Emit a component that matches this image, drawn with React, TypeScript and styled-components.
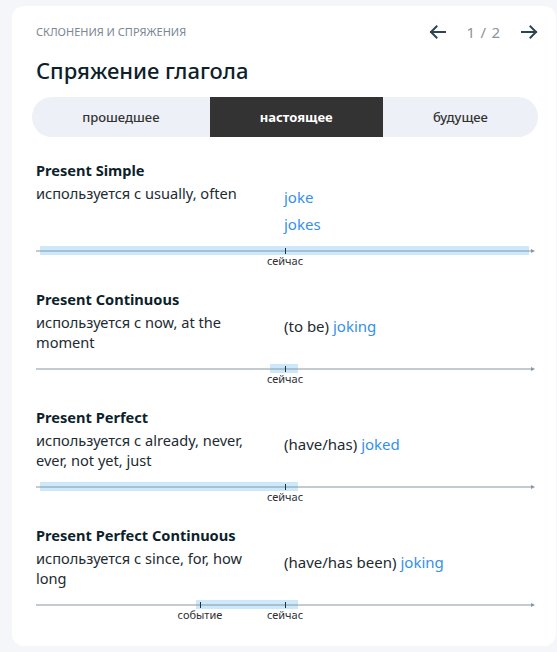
import React from 'react';
import styled, { createGlobalStyle } from 'styled-components';

interface Mark {
  at: number;
  label: string;
}

interface Tense {
  name: string;
  usage: string;
  aux?: string;
  forms: string[];
  band: [number, number];
  marks: Mark[];
}

const NOW = 249;

const tenses: Tense[] = [
  {
    name: 'Present Simple',
    usage: 'используется с usually, often',
    forms: ['joke', 'jokes'],
    band: [4, 493],
    marks: [{ at: NOW, label: 'сейчас' }],
  },
  {
    name: 'Present Continuous',
    usage: 'используется с now, at the moment',
    aux: '(to be)',
    forms: ['joking'],
    band: [234, 262],
    marks: [{ at: NOW, label: 'сейчас' }],
  },
  {
    name: 'Present Perfect',
    usage: 'используется с already, never, ever, not yet, just',
    aux: '(have/has)',
    forms: ['joked'],
    band: [4, 262],
    marks: [{ at: NOW, label: 'сейчас' }],
  },
  {
    name: 'Present Perfect Continuous',
    usage: 'используется с since, for, how long',
    aux: '(have/has been)',
    forms: ['joking'],
    band: [160, 262],
    marks: [
      { at: 164, label: 'событие' },
      { at: NOW, label: 'сейчас' },
    ],
  },
];

const tabs = ['прошедшее', 'настоящее', 'будущее'];

function ArrowIcon({ dir }: { dir: 'left' | 'right' }) {
  return (
    <svg width="17" height="14" viewBox="0 0 17 14" fill="none">
      <g transform={dir === 'left' ? 'translate(17 0) scale(-1 1)' : undefined}>
        <path d="M1 7h14M9.5 1.5L15 7l-5.5 5.5" stroke="#2b4555" strokeWidth="2" strokeLinecap="square" />
      </g>
    </svg>
  );
}

function Timeline({ tense }: { tense: Tense }) {
  return (
    <Axis>
      <Band style={{ left: tense.band[0], width: tense.band[1] - tense.band[0] }} />
      <AxisLine viewBox="0 0 500 6" preserveAspectRatio="none">
        <line x1="0" y1="3" x2="497" y2="3" stroke="#8796a2" strokeWidth="1" />
        <path d="M495 1L499 3L495 5Z" fill="#8796a2" />
      </AxisLine>
      {tense.marks.map((m) => (
        <React.Fragment key={m.label}>
          <Tick style={{ left: m.at }} />
          <TickLabel style={{ left: m.at }}>{m.label}</TickLabel>
        </React.Fragment>
      ))}
    </Axis>
  );
}

export default function App() {
  return (
    <>
      <GlobalStyle />
      <Page>
        <Card>
          <Header>
            <Kicker>Склонения и спряжения</Kicker>
            <Pager>
              <ArrowIcon dir="left" />
              <PageNum>1 / 2</PageNum>
              <ArrowIcon dir="right" />
            </Pager>
          </Header>
          <Title>Спряжение глагола</Title>
          <Tabs>
            {tabs.map((t) => (
              <Tab key={t} $active={t === 'настоящее'}>
                {t}
              </Tab>
            ))}
          </Tabs>
          <Sections>
            {tenses.map((tense) => (
              <Section key={tense.name}>
                <TenseName>{tense.name}</TenseName>
                <Row>
                  <Usage>{tense.usage}</Usage>
                  <Forms>
                    {tense.forms.map((f) => (
                      <FormLine key={f}>
                        {tense.aux && <>{tense.aux} </>}
                        <Verb>{f}</Verb>
                      </FormLine>
                    ))}
                  </Forms>
                </Row>
                <Timeline tense={tense} />
              </Section>
            ))}
          </Sections>
        </Card>
      </Page>
    </>
  );
}

const GlobalStyle = createGlobalStyle`
  html, body {
    margin: 0;
    padding: 0;
    background: #f4f6f9;
  }

  body {
    font-family: 'Noto Sans', 'Open Sans', sans-serif;
    color: #1f2a33;
  }

  * {
    box-sizing: border-box;
  }
`;

const Page = styled.main`
  min-height: 652px;
  padding: 6px 1px 6px 12px;
`;

const Card = styled.section`
  display: flex;
  flex-direction: column;

  padding: 18px 18px 23px 24px;

  background-color: #ffffff;
  border-radius: 12px;
`;

const Header = styled.header`
  display: flex;
  justify-content: space-between;
  align-items: center;

  height: 16px;
`;

const Kicker = styled.p`
  margin: 0;

  font-size: 11px;
  line-height: 16px;
  letter-spacing: 0;
  text-transform: uppercase;

  color: #7b8792;
`;

const Pager = styled.div`
  display: flex;
  align-items: center;
  gap: 20px;

  svg {
    display: block;
  }
`;

const PageNum = styled.span`
  font-size: 15px;
  line-height: 16px;
  letter-spacing: 0.8px;

  color: #8a949d;
`;

const Title = styled.h1`
  margin: 16px 0 0;

  font-size: 22px;
  line-height: 28px;
  font-weight: 500;

  color: #0e1f2c;
`;

const Tabs = styled.nav`
  display: flex;

  height: 40px;
  margin: 13px 0 0 -4px;

  background-color: #edf0f6;
  border-radius: 20px;
`;

const Tab = styled.button<{ $active?: boolean }>`
  flex: 1 1 auto;

  display: flex;
  justify-content: center;
  align-items: center;

  padding: 0;

  border: none;
  background-color: ${({ $active }) => ($active ? '#333333' : 'transparent')};

  font-family: inherit;
  font-size: 13px;
  font-weight: ${({ $active }) => ($active ? 700 : 500)};

  color: ${({ $active }) => ($active ? '#ffffff' : '#333333')};
`;

const Sections = styled.div`
  display: flex;
  flex-direction: column;
  gap: 20px;

  margin-top: 23px;
`;

const Section = styled.article`
  display: flex;
  flex-direction: column;
`;

const TenseName = styled.h2`
  margin: 0;

  font-size: 14.6px;
  line-height: 20px;
  font-weight: 700;

  color: #0e1f2c;
`;

const Row = styled.div`
  display: grid;
  grid-template-columns: 248px 1fr;

  margin-top: 3px;
`;

const Usage = styled.p`
  margin: 0;
  padding-right: 30px;

  font-size: 14.6px;
  line-height: 20px;

  color: #222a31;
`;

const Forms = styled.div`
  display: flex;
  flex-direction: column;

  padding-top: 1px;
  margin-bottom: -4px;
`;

const FormLine = styled.p`
  margin: 0;

  font-size: 15px;
  line-height: 27px;

  color: #222a31;
`;

const Verb = styled.span`
  color: #3490ea;
`;

const Axis = styled.div`
  position: relative;

  height: 24px;
  margin-top: 11px;
`;

const AxisLine = styled.svg`
  position: absolute;
  top: 3px;
  left: 0;

  width: 500px;
  height: 6px;
`;

const Band = styled.span`
  position: absolute;
  top: 1px;

  height: 9px;

  background-color: #cce9fb;
`;

const Tick = styled.span`
  position: absolute;
  top: 3px;

  width: 1px;
  height: 6px;

  background-color: #1d3344;
`;

const TickLabel = styled.span`
  position: absolute;
  top: 10px;

  transform: translateX(-50%);

  font-size: 11px;
  line-height: 12px;
  white-space: nowrap;

  color: #2b2f33;
`;
